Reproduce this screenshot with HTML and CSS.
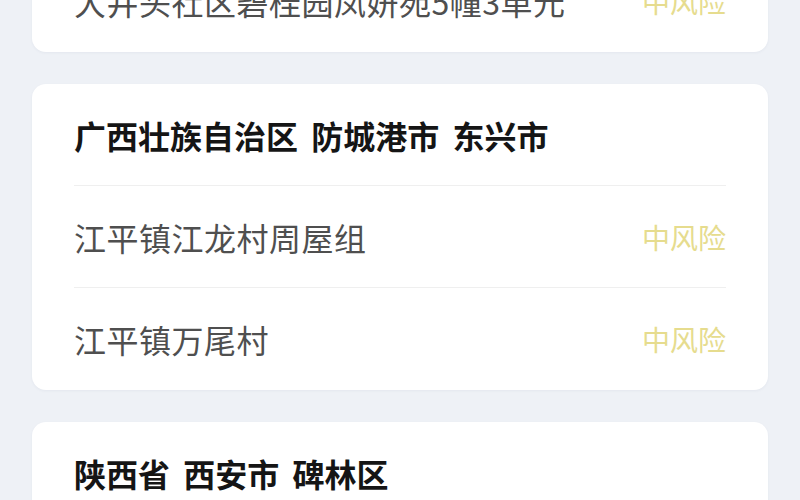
FILE: index.html
```html
<!DOCTYPE html>
<html lang="zh-CN">
<head>
    <meta charset="UTF-8">
    <meta name="viewport" content="width=device-width, initial-scale=1.0">
    <title>中风险地区</title>
    <link rel="stylesheet" href="styles.css">
</head>
<body>
    <div class="list">
        <div class="card card-scrolled">
            <div class="row">
                <span class="place">大井头社区碧桂园凤妍苑5幢3单元</span>
                <span class="risk">中风险</span>
            </div>
        </div>

        <div class="card">
            <div class="row title">广西壮族自治区 防城港市 东兴市</div>
            <div class="row">
                <span class="place">江平镇江龙村周屋组</span>
                <span class="risk">中风险</span>
            </div>
            <div class="row">
                <span class="place">江平镇万尾村</span>
                <span class="risk">中风险</span>
            </div>
        </div>

        <div class="card card-open">
            <div class="row title">陕西省 西安市 碑林区</div>
        </div>
    </div>
</body>
</html>
```

FILE: styles.css
```css
body {
    margin: 0;
    background-color: #eef1f6;
    font-family: 'Noto Sans CJK SC', 'Noto Sans', sans-serif;
    overflow: hidden;
}

.list {
    display: flex;
    flex-direction: column;
    gap: 32px;
    padding: 0 32px;
}

/* the first card is partly scrolled out of view */
.card-scrolled {
    margin-top: -50px;
}

.card {
    background-color: #fff;
    border-radius: 14px;
    padding: 0 42px;
    box-shadow: 0 1px 3px rgba(40, 60, 100, 0.05);
}

/* the last card runs on below the fold */
.card-open {
    min-height: 160px;
}

.row {
    display: flex;
    align-items: center;
    justify-content: space-between;
    height: 101px;
    border-bottom: 1px solid #efefef;
}

.row:last-child {
    height: 102px;
    border-bottom: none;
}

.title {
    font-size: 32px;
    font-weight: 700;
    color: #151515;
    word-spacing: 6px;
}

.place {
    font-size: 32px;
    letter-spacing: 0.5px;
    color: #4f4f4f;
}

.risk {
    font-size: 28px;
    color: #e6dc8e;
}
```
